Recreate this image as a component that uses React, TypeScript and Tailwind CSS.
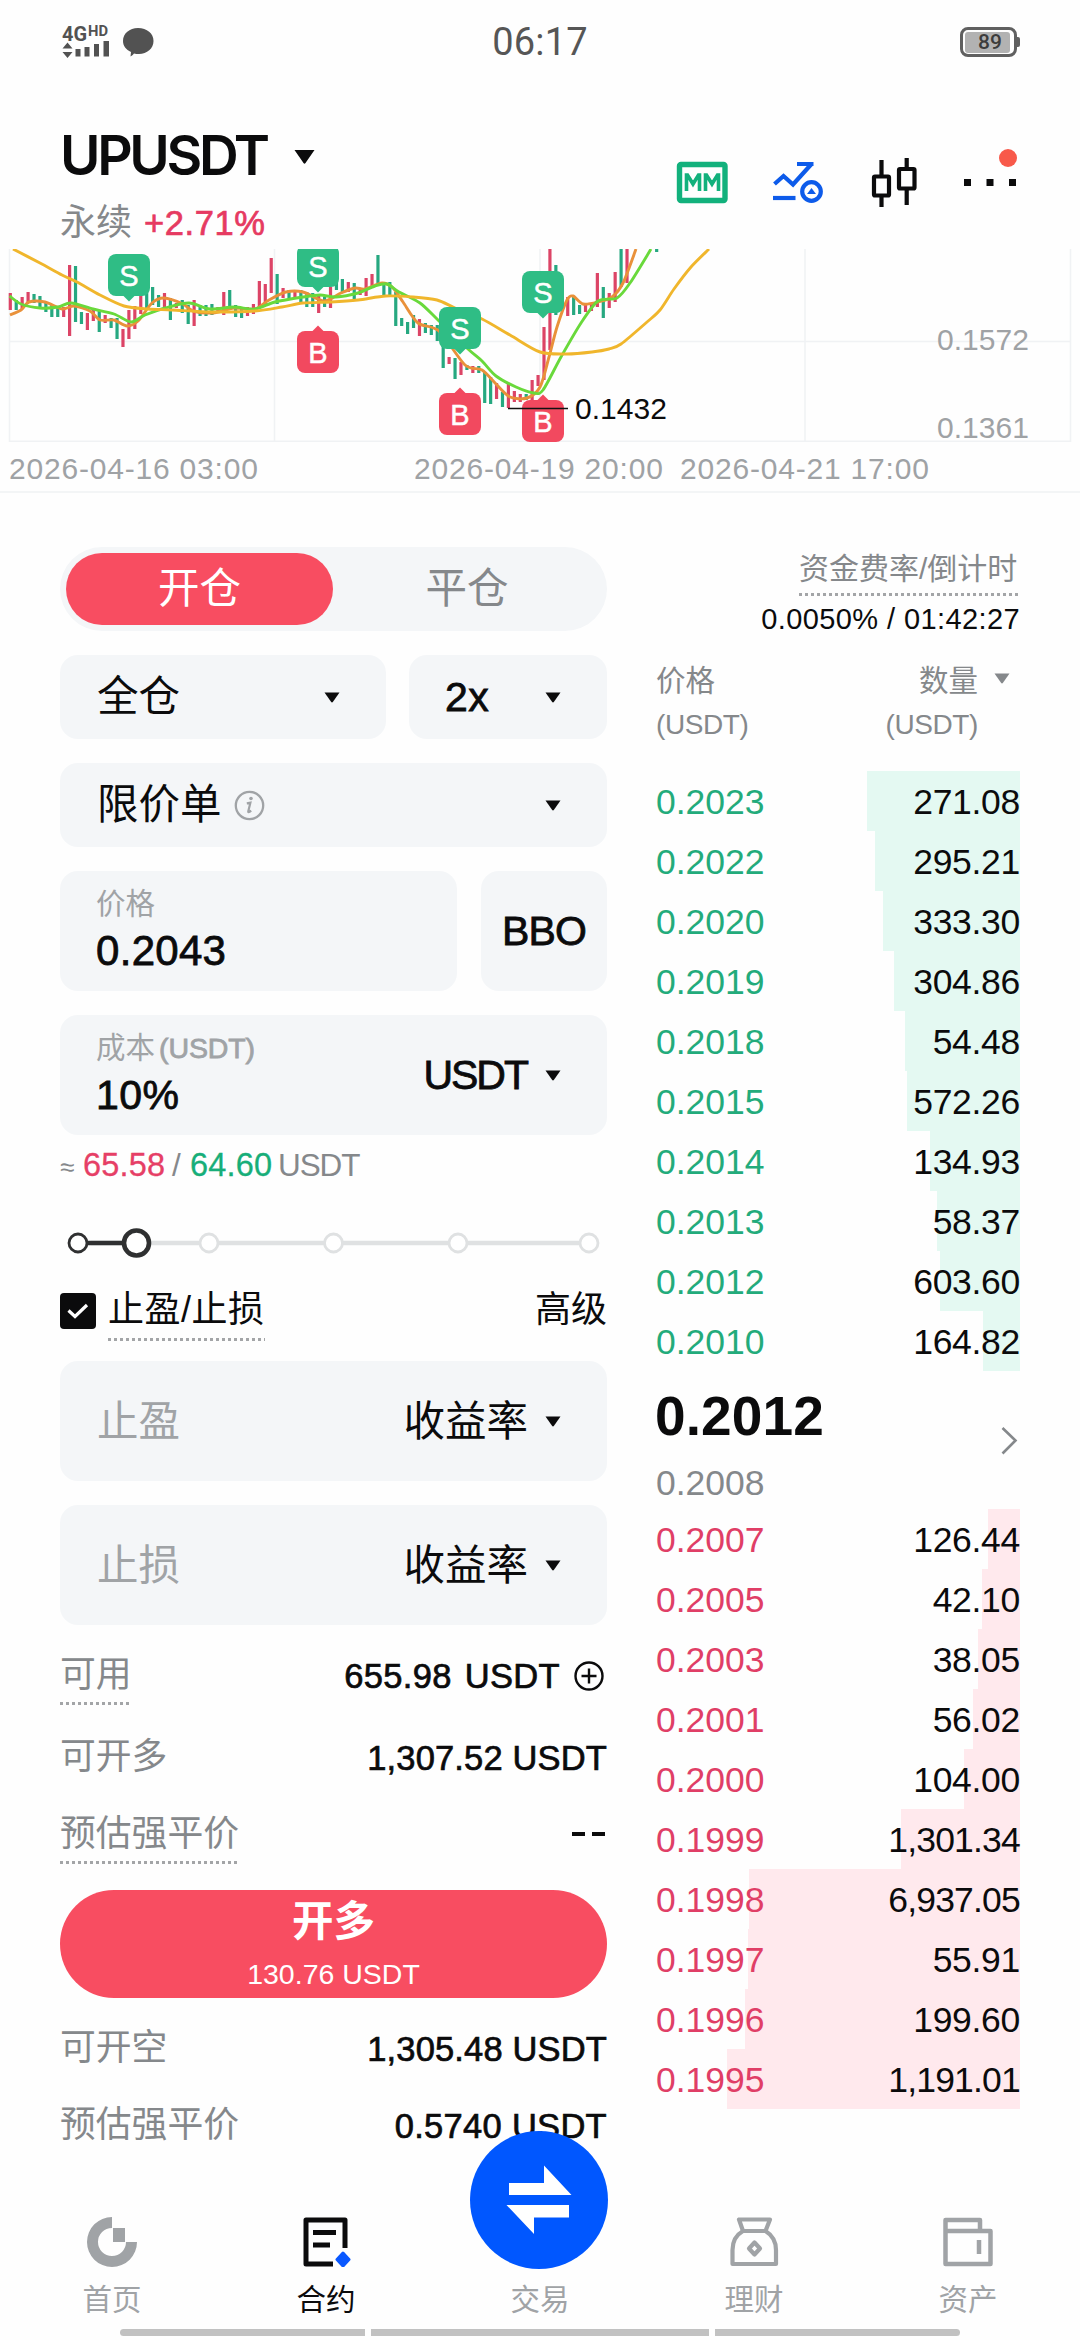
import React from "react";

type Candle = [number, string, number, number];

const CANDLES: Candle[] = [
  [0, "r", 44, 61], [1, "g", 51, 61], [2, "r", 48, 60], [3, "r", 43, 53], [4, "g", 45, 54], [5, "g", 47, 58],
  [6, "g", 53, 63], [7, "g", 56, 68], [8, "g", 58, 68], [9, "r", 58, 68], [10, "r", 16, 87], [11, "g", 17, 73],
  [12, "g", 63, 75], [13, "r", 64, 81], [14, "r", 61, 72], [15, "g", 61, 83], [16, "r", 66, 74], [17, "g", 69, 79],
  [18, "g", 69, 90], [19, "r", 80, 98], [20, "r", 61, 90], [21, "r", 57, 80], [22, "r", 44, 65], [23, "g", 41, 59],
  [24, "g", 38, 56], [25, "g", 46, 58], [26, "r", 44, 59], [27, "g", 49, 71], [28, "r", 54, 59], [29, "g", 51, 64],
  [30, "g", 56, 75], [31, "r", 51, 77], [32, "g", 56, 67], [33, "g", 56, 67], [34, "g", 55, 66], [35, "r", 58, 64],
  [36, "r", 43, 66], [37, "g", 41, 61], [38, "g", 56, 68], [39, "g", 58, 69], [40, "r", 58, 67], [41, "r", 55, 65],
  [42, "r", 32, 59], [43, "r", 35, 56], [44, "r", 9, 44], [45, "g", 25, 55], [46, "r", 39, 49], [47, "g", 41, 49],
  [48, "r", 41, 48], [49, "g", 41, 53], [50, "g", 43, 58], [51, "g", 44, 58], [52, "r", 46, 64], [53, "g", 48, 58],
  [54, "r", 38, 59], [55, "g", 31, 41], [56, "g", 30, 44], [57, "r", 33, 43], [58, "g", 34, 51], [59, "r", 39, 46],
  [60, "r", 29, 47], [61, "r", 25, 39], [62, "g", 6, 36], [63, "g", 33, 46], [64, "g", 33, 46], [65, "g", 43, 77],
  [66, "g", 69, 77], [67, "g", 73, 85], [68, "g", 66, 79], [69, "r", 70, 87], [70, "g", 74, 84], [71, "g", 76, 86],
  [72, "g", 76, 92], [73, "g", 91, 119], [74, "r", 108, 115], [75, "g", 109, 130], [76, "r", 113, 126], [77, "g", 116, 121],
  [78, "r", 117, 124], [79, "g", 117, 124], [80, "g", 123, 154], [81, "g", 128, 155], [82, "r", 134, 150], [83, "g", 143, 158],
  [84, "r", 134, 159], [85, "r", 142, 153], [86, "r", 145, 153], [87, "g", 145, 151], [88, "r", 131, 151], [89, "r", 126, 137],
  [90, "r", 78, 131], [91, "r", 0, 101], [92, "g", 16, 66], [94, "r", 48, 67], [95, "g", 48, 66], [96, "g", 56, 65],
  [97, "r", 56, 63], [98, "r", 54, 62], [99, "r", 24, 58], [100, "g", 38, 69], [101, "r", 44, 59], [102, "r", 23, 53],
  [103, "g", 0, 38], [104, "r", 0, 34], [109, "g", 0, 3],
];

type Pt = [number, number];

const MA_SLOW: Pt[] = [
  [13, 0], [40, 14], [62, 26], [77, 33], [100, 46], [124, 57], [148, 60], [172, 61], [213, 63], [255, 62], [282, 58],
  [303, 54], [331, 53], [358, 51], [386, 47], [413, 48], [437, 51], [455, 59], [482, 70], [510, 86], [540, 103],
  [567, 105], [592, 103], [609, 100], [621, 95], [647, 73], [660, 61], [674, 40], [691, 18], [709, 0],
];
const MA_MID: Pt[] = [
  [9.6, 47], [21, 55], [40, 59], [58, 58], [71, 54], [93, 60], [114, 65], [131, 73], [145, 66], [165, 59], [189, 54],
  [210, 60], [234, 58], [255, 60], [275, 53], [303, 48], [320, 46], [336, 48], [358, 44], [375, 37], [387, 35],
  [399, 43], [420, 54], [439, 72], [468, 100], [482, 112], [496, 127], [516, 138], [534, 144], [543, 141],
  [561, 108], [581, 74], [598, 52], [617, 49], [630, 34], [651, 0],
];
const MA_FAST: Pt[] = [
  [10, 66], [21, 61], [29, 53], [45, 53], [62, 60], [74, 57], [90, 62], [100, 71], [114, 71], [127, 77], [138, 72],
  [152, 54], [164, 49], [183, 55], [193, 62], [213, 64], [234, 59], [255, 60], [269, 51], [286, 43], [303, 43],
  [324, 52], [341, 44], [355, 39], [365, 40], [382, 34], [393, 39], [403, 53], [418, 74], [439, 82], [465, 116],
  [482, 121], [496, 135], [510, 148], [527, 149], [540, 138], [549, 108], [557, 78], [567, 51], [573, 47],
  [583, 55], [598, 53], [612, 48], [623, 34], [636, 0],
];

function smooth(pts: Pt[]) {
  let d = `M${pts[0][0]},${pts[0][1]}`;
  for (let i = 0; i < pts.length - 1; i++) {
    const a = pts[Math.max(0, i - 1)];
    const b = pts[i];
    const c = pts[i + 1];
    const e = pts[Math.min(pts.length - 1, i + 2)];
    d += ` C${b[0] + (c[0] - a[0]) / 7},${b[1] + (c[1] - a[1]) / 7} ${c[0] - (e[0] - b[0]) / 7},${c[1] - (e[1] - b[1]) / 7} ${c[0]},${c[1]}`;
  }
  return d;
}

function Marker({ x, y, kind }: { x: number; y: number; kind: "S" | "B" }) {
  const sell = kind === "S";
  return (
    <g fill={sell ? "#2fbd85" : "#f2495f"}>
      <rect x={x} y={y} width="42" height="42" rx="8" />
      <path d={sell ? `M${x + 15},${y + 41.5} l6,6 l6,-6 z` : `M${x + 15},${y + 0.5} l6,-6 l6,6 z`} />
      <text x={x + 21} y={y + 31.5} textAnchor="middle" fontSize="29" fill="#fff" fontFamily="Liberation Sans, sans-serif" stroke="#fff" strokeWidth="0.5">
        {kind}
      </text>
    </g>
  );
}

function Chart() {
  return (
    <svg className="block h-[193px] w-[1080px]" viewBox="0 0 1080 193">
      <g stroke="#f0f2f4" strokeWidth="1.5">
        <path d="M9.5,0 V193 M274.5,0 V193 M540,0 V193 M805,0 V193 M1070.5,0 V193 M9,92.5 H1070" />
        <path d="M9,192.5 H1071" strokeWidth="2" />
      </g>
      <g strokeWidth="3.2">
        {CANDLES.map(([i, c, a, b]) => (
          <path key={i} d={`M${10.3 + 5.93 * i},${a} V${b}`} stroke={c === "r" ? "#dc4466" : "#26a880"} />
        ))}
      </g>
      <g fill="none" strokeWidth="2.9">
        <path d={smooth(MA_FAST)} stroke="#e9913a" />
        <path d={smooth(MA_MID)} stroke="#69d93b" />
        <path d={smooth(MA_SLOW)} stroke="#f0b62c" />
      </g>
      <Marker x={108} y={5} kind="S" />
      <Marker x={297} y={-4} kind="S" />
      <Marker x={297} y={82} kind="B" />
      <Marker x={439} y={58} kind="S" />
      <Marker x={439} y={144} kind="B" />
      <Marker x={522} y={22} kind="S" />
      <Marker x={522} y={151} kind="B" />
      <path d="M508,159.5 H568" stroke="#111" strokeWidth="1.6" />
      <g fontFamily="Liberation Sans, sans-serif" fontSize="30">
        <text x="575" y="170" fill="#0b0b0c" textLength="92">0.1432</text>
        <text x="937" y="101" fill="#9fa2a5" textLength="92">0.1572</text>
        <text x="937" y="188.500" fill="#9fa2a5" textLength="92">0.1361</text>
      </g>
    </svg>
  );
}

function StatusBar() {
  return (
    <div className="grid h-[84px] grid-cols-[1fr_auto_1fr] items-center px-[60px]">
      <svg className="h-[36px] w-[96px] overflow-visible" viewBox="0 0 96 36" fill="#525252">
        <text x="2" y="16.5" fontFamily="Roboto, sans-serif" fontWeight="700" fontSize="20" textLength="25" lengthAdjust="spacingAndGlyphs">4G</text>
        <text x="28" y="11.5" fontFamily="Roboto, sans-serif" fontWeight="700" fontSize="14" textLength="20" lengthAdjust="spacingAndGlyphs">HD</text>
        <path d="M2.5,24.5 L7.5,18.5 L12.5,24.5 Z M2.5,28 L7.5,34 L12.5,28 Z" />
        <path d="M15.5,25 h5 v7.5 h-5 Z M24.5,23 h5 v9.500 h-5 Z M34,20 h5 v12.500 h-5 Z M43.500,17 h5.500 v15.500 h-5.500 Z" />
        <path d="M78,4 C87,4 93.500,9.500 93.500,17 C93.500,24.500 87,30 79,30 C77,30 75.500,30 74,29.500 C72.500,31.500 71.500,32 70.500,32.500 L71,28 C66,25.500 63,22 63,17 C63,9.500 69.500,4 78,4 Z" />
      </svg>
      <div className="font-['Roboto',sans-serif] text-[38px] leading-[40px] tracking-[0.200px] text-[#565656]">06:17</div>
      <div className="flex items-center justify-end">
        <div className="flex h-[30px] w-[57px] items-center rounded-[8px] border-[3px] border-[#606060] p-[1.500px]">
          <div className="flex h-full w-[45px] items-center justify-center rounded-[3px] bg-[#b2b2b2] pl-[6px] font-['Roboto',sans-serif] text-[21px] leading-[22px] font-medium text-[#3c3c3c]">89</div>
        </div>
        <div className="h-[10px] w-[3px] rounded-r-[2px] bg-[#606060]" />
      </div>
    </div>
  );
}

function Caret({ cls = "text-[#0b0b0c]" }: { cls?: string }) {
  return (
    <svg className={`h-[11px] w-[16px] shrink-0 ${cls}`} viewBox="0 0 16 11" fill="currentColor">
      <path d="M0.500,0.500 H15.500 L9,9.800 Q8,11 7,9.800 Z" />
    </svg>
  );
}

function Header() {
  return (
    <div className="flex h-[165px] justify-between pr-[60px] pl-[60px]">
      <div>
        <div className="mt-[39px] flex h-[64px] items-center">
          <div className="w-[209px] font-['Inter',sans-serif] text-[55px] leading-[64px] font-semibold tracking-[-3.300px] whitespace-nowrap text-[#0b0b0c]">UPUSDT</div>
          <svg className="mt-[4px] ml-[25px] h-[14px] w-[21px]" viewBox="0 0 21 14" fill="#0b0b0c">
            <path d="M0.500,0 H20.500 L11.500,13 Q10.500,14.500 9.500,13 Z" />
          </svg>
        </div>
        <div className="mt-[14px] flex h-[44px] items-center text-[36px] leading-[44px]">
          <span className="w-[84px] text-[#85888b]">永续</span>
          <span className="text-[34.500px] tracking-[0.600px] text-[#e63a61] [-webkit-text-stroke:0.7px]">+2.71%</span>
        </div>
      </div>
      <svg className="mt-[60px] h-[70px] w-[346px]" viewBox="674 144 346 70" fill="none">
        <rect x="679.500" y="164.500" width="45.500" height="36" rx="1.500" stroke="#12b17c" strokeWidth="5.400" />
        <path d="M686.500,191 V175 H687.500 L693,184 L698.500,175 H699.500 V191 M705.500,191 V175 H706.500 L712,184 L717.500,175 H718.500 V191" stroke="#12b17c" strokeWidth="3.600" />
        <g stroke="#0d5bea" strokeWidth="4.200">
          <path d="M774.500,184 L783.500,176 L793,184.500 L811.500,164 M797,164 H813.500" />
          <path d="M773,198 H795.500" />
          <circle cx="811.500" cy="191.500" r="9.300" />
          <path d="M807,194 L811.500,188 L816,194 Z" fill="#0d5bea" stroke="none" />
        </g>
        <g stroke="#0b0b0c" strokeWidth="4.200">
          <rect x="874" y="176.500" width="15" height="19" rx="1" />
          <path d="M881.500,160 V176 M881.500,196 V207" />
          <rect x="899" y="169" width="15.500" height="19.500" rx="1" />
          <path d="M906.700,158 V168 M906.700,189 V205" />
        </g>
        <path d="M964,179 h7 v7 h-7 Z M986.500,179 h7 v7 h-7 Z M1009,179 h7 v7 h-7 Z" fill="#0b0b0c" />
        <circle cx="1008" cy="158" r="9" fill="#f8594a" />
      </svg>
    </div>
  );
}

function Box({ className, children }: { className: string; children: React.ReactNode }) {
  return <div className={`flex items-center rounded-[18px] bg-[#f4f6f8] ${className}`}>{children}</div>;
}

function AmountSlider() {
  return (
    <svg className="block h-[36px] w-[547px]" viewBox="60 1225 547 36" fill="#fff">
      <path d="M91,1243 H589" stroke="#dfe1e2" strokeWidth="4.500" />
      <path d="M78,1243 H136" stroke="#2f3031" strokeWidth="4.500" />
      {[209, 333.5, 458, 589].map((x) => (
        <circle key={x} cx={x} cy="1243" r="9" stroke="#dfe1e2" strokeWidth="2.800" />
      ))}
      <circle cx="78" cy="1243" r="9" stroke="#2f3031" strokeWidth="2.800" />
      <circle cx="136.500" cy="1243" r="12.500" stroke="#2f3031" strokeWidth="4.600" />
    </svg>
  );
}

const DOTTED =
  "h-[3px] bg-[repeating-linear-gradient(90deg,#a3a5a7_0_3px,transparent_3px_6px)]";

function InfoRow({ label, value, height, spacing = "tracking-[-0.100px]", underline, plus }: { label: string; value: string; height: string; spacing?: string; underline?: boolean; plus?: boolean }) {
  return (
    <div className={`flex items-start justify-between ${height}`}>
      <div>
        <div className="mt-px h-[45px] text-[35.800px] leading-[46px] text-[#85888b]">{label}</div>
        {underline && <div className={`mt-[5px] ${DOTTED}`} />}
      </div>
      <div className={`mt-[2px] flex h-[46px] items-center text-[34.500px] leading-[46px] whitespace-pre text-[#0b0b0c] [-webkit-text-stroke:0.7px] ${spacing}`}>
        {value}
        {plus && (
          <svg className="mr-[3px] ml-[14px] h-[30px] w-[30px]" viewBox="0 0 30 30" fill="none" stroke="#0b0b0c" strokeWidth="2.400">
            <circle cx="15" cy="15" r="13.500" />
            <path d="M15,7.500 V22.500 M7.500,15 H22.500" />
          </svg>
        )}
      </div>
    </div>
  );
}

function OrderForm() {
  return (
    <div className="w-[547px]">
      <div className="flex h-[84px] items-center rounded-full bg-[#f4f6f8] p-[6px] text-[41.500px] leading-[60px]">
        <div className="flex h-[72px] w-[267px] items-center justify-center rounded-full bg-[#f84d61] text-white">开仓</div>
        <div className="flex-1 text-center text-[#85888b]">平仓</div>
      </div>

      <div className="mt-[24px] flex gap-[23.500px]">
        <Box className="h-[84px] w-[325.500px] justify-between pr-[46px] pl-[37px]">
          <span className="text-[41.500px] leading-[60px]">全仓</span>
          <Caret />
        </Box>
        <Box className="h-[84px] flex-1 justify-between pr-[46px] pl-[36px]">
          <span className="text-[41px] leading-[60px] tracking-[0.500px] [-webkit-text-stroke:0.8px]">2x</span>
          <Caret />
        </Box>
      </div>

      <Box className="mt-[24px] h-[84px] pr-[46px] pl-[37px]">
        <span className="text-[41.500px] leading-[60px]">限价单</span>
        <svg className="ml-[12px] h-[31px] w-[31px]" viewBox="0 0 31 31" fill="none">
          <circle cx="15.500" cy="15.500" r="13.700" stroke="#a0a3a6" strokeWidth="2.300" />
          <path d="M12.800,13.300 L16.400,12.700 L14.300,21.300 Q14,22.800 16,21.500 L17.200,20.600" stroke="#a0a3a6" strokeWidth="2.200" />
          <circle cx="17" cy="8.500" r="1.800" fill="#a0a3a6" />
        </svg>
        <div className="flex-1" />
        <Caret />
      </Box>

      <div className="mt-[24px] flex gap-[24px]">
        <Box className="h-[120px] w-[397px] pl-[36px]">
          <div>
            <div className="text-[29.500px] leading-[40px] text-[#a0a3a6]">价格</div>
            <div className="mt-[2px] mb-[2px] text-[42px] leading-[50px] tracking-[0.300px] [-webkit-text-stroke:0.8px]">0.2043</div>
          </div>
        </Box>
        <Box className="h-[120px] flex-1 justify-center">
          <span className="text-[41px] leading-[50px] tracking-[-0.800px] [-webkit-text-stroke:0.8px]">BBO</span>
        </Box>
      </div>

      <Box className="mt-[24px] h-[120px] pr-[46px] pl-[36px]">
        <div className="flex-1">
          <div className="text-[29.500px] leading-[40px] text-[#a0a3a6]">
            成本<span className="ml-[4px] text-[28.500px] tracking-[-0.100px] [-webkit-text-stroke:0.8px]">(USDT)</span>
          </div>
          <div className="mt-[2px] mb-[2px] text-[41px] leading-[50px] tracking-[0.400px] [-webkit-text-stroke:0.8px]">10%</div>
        </div>
        <span className="mr-[18px] text-[41px] leading-[50px] tracking-[-2px] [-webkit-text-stroke:0.8px]">USDT</span>
        <Caret />
      </Box>

      <div className="mt-[9px] flex h-[42px] items-center text-[31.500px] leading-[42px] text-[#85888b]">
        <span className="mt-[4px] w-[23px] text-[26px] font-medium">≈</span>
        <span className="w-[89px] text-[32.500px] tracking-[0.200px] text-[#e63f66] [-webkit-text-stroke:0.3px]">65.58</span>
        <span className="w-[18px]">/</span>
        <span className="w-[88px] text-[32.500px] tracking-[0.200px] text-[#17ae79] [-webkit-text-stroke:0.3px]">64.60</span>
        <span className="tracking-[-1.100px]">USDT</span>
      </div>

      <div className="mt-[39px]">
        <AmountSlider />
      </div>

      <div className="mt-[25px] flex h-[75px] items-start justify-between text-[36px] leading-[48px]">
        <div className="flex">
          <div className="mt-[7px] flex h-[36px] w-[36px] items-center justify-center rounded-[4px] bg-[#0b0b0c]">
            <svg className="h-[18px] w-[22px]" viewBox="0 0 22 18" fill="none" stroke="#fff" strokeWidth="3.200">
              <path d="M1.500,8.500 L8,14.500 L20,3" />
            </svg>
          </div>
          <div className="ml-[12px] w-[157px]">
            <div className="tracking-[0.500px] whitespace-nowrap">止盈/止损</div>
            <div className={`mt-[4px] ${DOTTED}`} />
          </div>
        </div>
        <div>高级</div>
      </div>

      {["止盈", "止损"].map((t) => (
        <Box key={t} className="mb-[24px] h-[120px] pr-[46px] pl-[37px] text-[41.500px] leading-[60px]">
          <span className="flex-1 pt-px text-[#a0a3a6]">{t}</span>
          <span className="mr-[17px] pt-px">收益率</span>
          <Caret />
        </Box>
      ))}

      <div className="pt-[2px]">
        <InfoRow label="可用" value="655.98 USDT" height="h-[82px]" spacing="tracking-[0.350px] [word-spacing:3px]" underline plus />
        <InfoRow label="可开多" value="1,307.52 USDT" height="h-[77px]" spacing="tracking-[0.150px]" />
        <div className="flex h-[80px] items-start justify-between">
          <div>
            <div className="mt-px h-[45px] text-[35.800px] leading-[46px] text-[#85888b]">预估强平价</div>
            <div className={`mt-[5px] ${DOTTED}`} />
          </div>
          <div className="mt-[22px] mr-[2px] flex gap-[7px]">
            <div className="h-[4px] w-[13px] bg-[#0b0b0c]" />
            <div className="h-[4px] w-[13px] bg-[#0b0b0c]" />
          </div>
        </div>
      </div>

      <div className="flex h-[108px] flex-col items-center rounded-full bg-[#f84d61] text-white">
        <div className="mt-[2px] h-[60px] text-[41.500px] leading-[60px] font-bold">开多</div>
        <div className="mt-[2px] text-[28.500px] leading-[40px] tracking-[0px]">130.76 USDT</div>
      </div>

      <div className="pt-[26px]">
        <InfoRow label="可开空" value="1,305.48 USDT" height="h-[77px]" spacing="tracking-[0.150px]" />
        <InfoRow label="预估强平价" value="0.5740 USDT" height="h-[60px]" spacing="tracking-[0.300px]" />
      </div>
    </div>
  );
}

const ASKS: [string, string, number][] = [
  ["0.2023", "271.08", 153], ["0.2022", "295.21", 145], ["0.2020", "333.30", 137], ["0.2019", "304.86", 126],
  ["0.2018", "54.48", 115], ["0.2015", "572.26", 113], ["0.2014", "134.93", 90], ["0.2013", "58.37", 83],
  ["0.2012", "603.60", 80], ["0.2010", "164.82", 37],
];
const BIDS: [string, string, number][] = [
  ["0.2007", "126.44", 32], ["0.2005", "42.10", 38], ["0.2003", "38.05", 42], ["0.2001", "56.02", 47],
  ["0.2000", "104.00", 56], ["0.1999", "1,301.34", 119], ["0.1998", "6,937.05", 271], ["0.1997", "55.91", 272],
  ["0.1996", "199.60", 275], ["0.1995", "1,191.01", 293],
];

function Depth({ rows, text, bar }: { rows: [string, string, number][]; text: string; bar: string }) {
  return (
    <div>
      {rows.map(([price, qty, w]) => (
        <div key={price} className="relative flex h-[60px] items-center justify-between pt-px pl-px text-[35.500px] leading-[58px]">
          <div className={`absolute top-0 right-0 h-full ${bar}`} style={{ width: w }} />
          <span className={`relative ${text}`}>{price}</span>
          <span className={`relative text-[#0b0b0c] ${qty.length > 6 ? "tracking-[-0.800px]" : "tracking-[-0.300px]"}`}>{qty}</span>
        </div>
      ))}
    </div>
  );
}

function OrderBook() {
  return (
    <div className="w-[365px]">
      <div className="flex h-[94px] flex-col items-end">
        <div className="w-[221px]">
          <div className="h-[42px] pt-px text-[30px] leading-[42px] whitespace-nowrap text-[#85888b]">资金费率/倒计时</div>
          <div className={`mt-[4px] ${DOTTED}`} />
        </div>
        <div className="mt-[3px] h-[40px] text-[29px] leading-[40px] tracking-[0.400px] whitespace-nowrap">0.0050% / 01:42:27</div>
      </div>
      <div className="mt-[18px] flex h-[112px] justify-between text-[#85888b]">
        <div className="pl-px">
          <div className="text-[29.500px] leading-[44px]">价格</div>
          <div className="text-[28px] leading-[44px] tracking-[-0.400px]">(USDT)</div>
        </div>
        <div className="flex pr-[10px]">
          <div className="text-right">
            <div className="text-[29.500px] leading-[44px]">数量</div>
            <div className="text-[28px] leading-[44px] tracking-[-0.400px]">(USDT)</div>
          </div>
          <div className="mt-[14px] ml-[16px]">
            <Caret cls="text-[#85888b]" />
          </div>
        </div>
      </div>
      <Depth rows={ASKS} text="text-[#23ab7b]" bar="bg-[#e4f9f2]" />
      <div className="flex h-[138px] justify-between">
        <div>
          <div className="mt-[10px] h-[70px] text-[55px] leading-[70px] font-bold tracking-[0.100px]">0.2012</div>
          <div className="mt-[9px] h-[46px] pl-px text-[35.500px] leading-[46px] text-[#85888b]">0.2008</div>
        </div>
        <svg className="mt-[55px] mr-[2px] h-[30px] w-[17px]" viewBox="0 0 17 30" fill="none" stroke="#85888b" strokeWidth="2.600">
          <path d="M1.500,2 L14.500,14.500 L1.500,27.500" />
        </svg>
      </div>
      <Depth rows={BIDS} text="text-[#e03e66]" bar="bg-[#ffe9ed]" />
    </div>
  );
}

const TABS = [
  {
    label: "首页",
    icon: (
      <>
        <path d="M25,0 V11 A14,14 0 1 0 39,25 H50 A25,25 0 1 1 25,0 Z" fill="#a0a3a6" />
        <path d="M26,11 H38 V25 H26 Z" fill="#a0a3a6" />
      </>
    ),
  },
  {
    label: "合约",
    icon: (
      <>
        <path d="M44,31 V3 H5 V47 H32" stroke="#0b0b0c" strokeWidth="5" strokeLinejoin="round" />
        <path d="M12,15.500 H35 M12,28 H29" stroke="#0b0b0c" strokeWidth="5" />
        <path d="M42,36 L48,42.500 L42,49 L36,42.500 Z" fill="#0a58ff" stroke="#0a58ff" strokeWidth="3" strokeLinejoin="round" />
      </>
    ),
  },
  { label: "交易", icon: null },
  {
    label: "理财",
    icon: (
      <g stroke="#a0a3a6" strokeWidth="4.200" strokeLinejoin="round">
        <path d="M10,2.500 H41 L36.500,14 H14 Z" />
        <path d="M14,14 C7,18 3.500,25 3.500,33 V47 H47 V33 C47,25 43,18 36.500,14" />
        <path d="M25.500,25.500 L31,31.500 L25.500,37.500 L20,31.500 Z" />
      </g>
    ),
  },
  {
    label: "资产",
    icon: (
      <g stroke="#a0a3a6" strokeWidth="4.500" strokeLinejoin="round">
        <path d="M2.500,14 H47.500 V47 H2.500 V3 H37 V14" />
        <path d="M36,23 V37" />
      </g>
    ),
  },
];

function TabBar() {
  return (
    <div className="relative flex h-[112px] px-[5px]">
      {TABS.map(({ label, icon }, i) => (
        <div key={label} className="flex w-[214px] flex-col items-center">
          <svg className="h-[50px] w-[50px]" viewBox="0 0 50 50" fill="none">
            {icon}
          </svg>
          <div className={`mt-[13px] text-[29.500px] leading-[40px] ${i === 1 ? "text-[#0b0b0c]" : "text-[#a0a3a6]"}`}>{label}</div>
        </div>
      ))}
      <div className="absolute -top-[86px] left-[470px] flex h-[138px] w-[138px] items-center justify-center rounded-full bg-[#0057ff]">
        <svg className="h-[70px] w-[66px]" viewBox="0 0 66 70" fill="#fff">
          <path d="M3,18 H38 V0.500 L65.500,30 H3 Z" />
          <path d="M0.500,40 H63 V52.500 H28 V69 Z" />
        </svg>
      </div>
    </div>
  );
}

export default function App() {
  return (
    <div className="flex h-[2340px] w-[1080px] flex-col overflow-hidden bg-[#fefefe] font-['Liberation_Sans','Noto_Sans_CJK_SC',sans-serif] text-[#0b0b0c]">
      <StatusBar />
      <Header />
      <Chart />
      <div className="flex h-[51px] border-b-2 border-[#f3f5f6] pl-[9px] text-[30px] leading-[54px] tracking-[0.800px] whitespace-nowrap text-[#9fa2a5]">
        <div className="w-[405px]">2026-04-16 03:00</div>
        <div className="w-[266px]">2026-04-19 20:00</div>
        <div>2026-04-21 17:00</div>
      </div>
      <div className="mt-[54px] flex h-[1670px] shrink-0 justify-between pr-[60px] pl-[60px]">
        <OrderForm />
        <OrderBook />
      </div>
      <TabBar />
      <div className="flex gap-[6px] pl-[120px]">
        <div className="h-[7px] w-[245px] rounded-l-full bg-[#c1c1c1]" />
        <div className="h-[7px] w-[338px] bg-[#c1c1c1]" />
        <div className="h-[7px] w-[245px] rounded-r-full bg-[#c1c1c1]" />
      </div>
    </div>
  );
}
